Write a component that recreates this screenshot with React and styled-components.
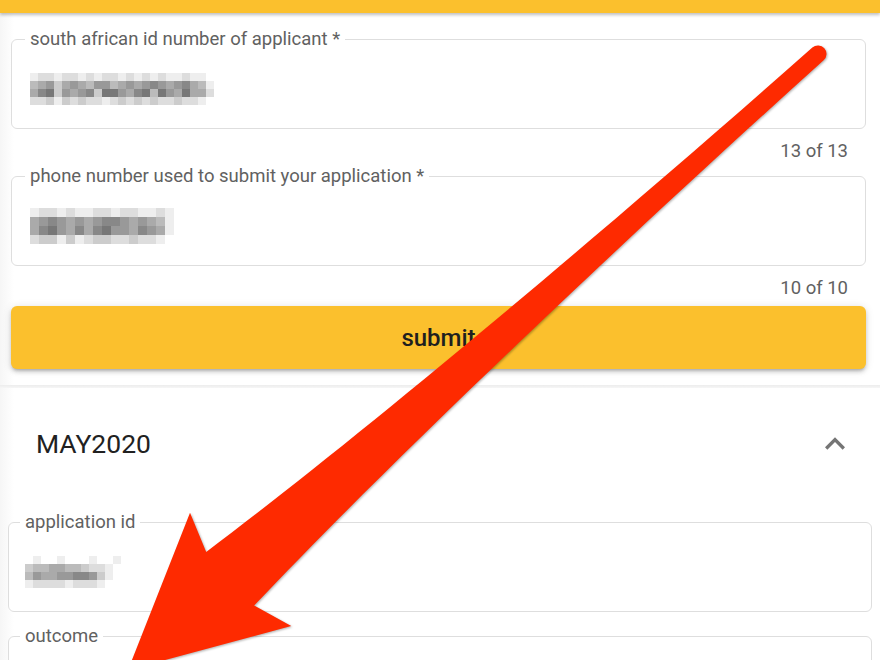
import styled, { createGlobalStyle } from 'styled-components';

const GlobalStyle = createGlobalStyle`
  html, body {
    margin: 0;
    padding: 0;
    background: #fff;
  }
  body {
    font-family: Roboto, "Noto Sans", "Liberation Sans", sans-serif;
    color: #212121;
  }
`;

// redacted values, one digit per block (0 = white, 9 = dark)
const idBlocks = [
	"122122121221212121121100",
	"456356546645656765675410",
	"578365673886578486585520",
	"223132322123232322322100",
];
const phoneBlocks = [
	"12212112212211210",
	"56765656776565410",
	"57865757866576510",
	"23313123322322100",
];
const appBlocks = [
	"010010001001",
	"344554432210",
	"465566776310",
	"122221222100",
];

const shade = c => {
	const v = 255 - Number(c) * 17;
	return `rgb(${v},${v},${v})`;
};

function Mosaic({ rows, cell }) {
	return (
		<svg width={rows[0].length * cell} height={rows.length * cell}>
			{rows.map((row, y) =>
				row.split('').map((c, x) => (
					<rect key={x + '-' + y} x={x * cell} y={y * cell} width={cell} height={cell} fill={shade(c)} />
				))
			)}
		</svg>
	);
}

function ChevronUp() {
	return (
		<svg width="40" height="40" viewBox="0 0 24 24">
			<path d="M12 8l-6 6 1.41 1.41L12 10.83l4.59 4.58L18 14z" fill="#757575" />
		</svg>
	);
}

function Arrow() {
	return (
		<ArrowLayer width="880" height="660" viewBox="0 0 880 660">
			<g transform="translate(128,670) rotate(-41.76)">
				<path
					d="M0,0 L151,-76 L137,-36 C300,-22 600,-10 925,-8.5 A8.5,8.5 0 0 1 925,8.5 C600,10 300,22 137,36 L151,76 Z"
					fill="#fe2a00"
				/>
			</g>
		</ArrowLayer>
	);
}

export default function App() {
	return (
		<Page>
			<GlobalStyle />
			<TopBar />
			<FormSection>
				<Field $pad={13}>
					<Legend>south african id number of applicant *</Legend>
					<Value><Mosaic rows={idBlocks} cell={8} /></Value>
				</Field>
				<Counter>13 of 13</Counter>
				<Field $pad={13}>
					<Legend>phone number used to submit your application *</Legend>
					<Value><Mosaic rows={phoneBlocks} cell={9} /></Value>
				</Field>
				<Counter>10 of 10</Counter>
				<SubmitButton type="button">submit</SubmitButton>
			</FormSection>
			<Divider />
			<PanelHeader>
				<PanelTitle>MAY2020</PanelTitle>
				<ChevronUp />
			</PanelHeader>
			<PanelBody>
				<Field $pad={11}>
					<Legend>application id</Legend>
					<Value><Mosaic rows={appBlocks} cell={8} /></Value>
				</Field>
				<Field $pad={11}>
					<Legend>outcome</Legend>
					<Value />
				</Field>
			</PanelBody>
			<Arrow />
		</Page>
	);
}

const Page = styled.div`
	position: relative;
	height: 100vh;
	overflow: hidden;
	background: linear-gradient(90deg, #f6f6f6, #fff 14px);
`;

const TopBar = styled.div`
	height: 13px;
	background: #fbc02d;
	box-shadow: 0 2px 3px rgba(0, 0, 0, 0.25);
`;

const FormSection = styled.section`
	display: flex;
	flex-direction: column;
	padding: 16px 14px 16px 11px;
`;

const Field = styled.fieldset`
	margin: 0;
	min-width: 0;
	padding: 0 ${p => p.$pad}px;
	border: 1px solid #dedede;
	border-radius: 6px;
	background: #fff;
`;

const Legend = styled.legend`
	padding: 0 5px;
	font-size: 18.5px;
	line-height: 20px;
	color: #616161;
`;

const Value = styled.div`
	height: 79px;
	display: flex;
	align-items: center;
	padding-left: 5px;
`;

const Counter = styled.div`
	margin: 12px 0 5px;
	padding-right: 18px;
	text-align: right;
	font-size: 18.5px;
	line-height: 20px;
	color: #616161;
`;

const SubmitButton = styled.button`
	margin-top: 3px;
	height: 63px;
	border: none;
	border-radius: 6px;
	background: #fbc02d;
	color: #1f1f1f;
	font-family: inherit;
	font-size: 24px;
	font-weight: 500;
	box-shadow: 0 3px 3px -2px rgba(0, 0, 0, 0.2), 0 3px 4px rgba(0, 0, 0, 0.14), 0 1px 8px rgba(0, 0, 0, 0.12);
`;

const Divider = styled.div`
	height: 3px;
	background: linear-gradient(#ececec, #f6f6f6);
`;

const PanelHeader = styled.div`
	height: 111px;
	display: flex;
	align-items: center;
	justify-content: space-between;
	padding: 0 25px 0 36px;
`;

const PanelTitle = styled.h2`
	margin: 0;
	font-size: 26.5px;
	font-weight: 400;
	color: #212121;
`;

const PanelBody = styled.div`
	display: flex;
	flex-direction: column;
	gap: 14px;
	padding: 13px 8px 0 8px;
`;

const ArrowLayer = styled.svg`
	position: absolute;
	top: 0;
	left: 0;
	pointer-events: none;
	filter: drop-shadow(1px 1px 1px rgba(0, 0, 0, 0.3));
`;
